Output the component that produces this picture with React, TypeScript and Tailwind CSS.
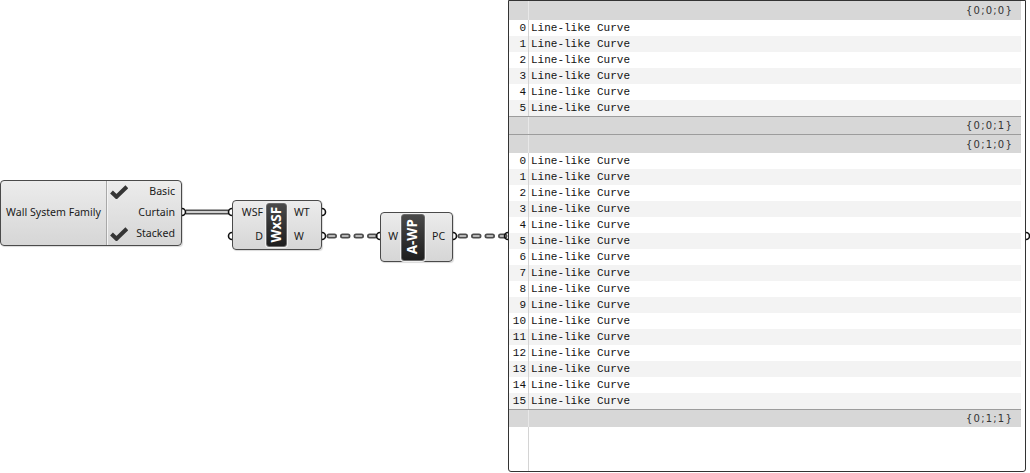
import React from "react";

const branches = [
  { head: "{0;0;0}", count: 6, foot: "{0;0;1}" },
  { head: "{0;1;0}", count: 16, foot: "{0;1;1}" },
];

function Check() {
  return (
    <svg width="18" height="14" viewBox="0 0 18 14">
      <path d="M1.5 7 L6.5 11.8 L16.8 1.8" fill="none" stroke="#353535" strokeWidth="4" strokeLinejoin="miter" />
    </svg>
  );
}

function LabelTag({ text, className }: { text: string; className: string }) {
  return (
    <div
      className={`flex items-center justify-center rounded-[3px] border border-[#6a6a6a] bg-gradient-to-b from-[#4a4a4a] to-[#1e1e1e] shadow-[0_0_0_1px_#f0f0f0] ${className}`}
    >
      <span className="-rotate-90 whitespace-nowrap font-['Noto_Sans',sans-serif] text-[13.5px] font-bold leading-none text-white">{text}</span>
    </div>
  );
}

const body =
  "absolute rounded-[4px] border border-[#4a4a4a] bg-gradient-to-b from-[#ececec] to-[#d6d6d6] shadow-[1px_1px_1px_rgba(0,0,0,0.15)] font-['Noto_Sans','Liberation_Sans',sans-serif] text-[10.6px] text-[#1a1a1a]";

export default function App() {
  return (
    <div className="relative h-[473px] w-[1030px] overflow-hidden bg-white">
      {/* wires + grips */}
      <svg className="absolute inset-0" width="1030" height="473">
        <line x1="186" y1="212" x2="229" y2="212" stroke="#4d4d4d" strokeWidth="5" />
        <line x1="186" y1="212" x2="229" y2="212" stroke="#cfcfcf" strokeWidth="1.8" />
        {[
          [325, 377],
          [456, 505],
        ].map(([a, b]) => (
          <g key={a}>
            <line x1={a + 4} y1="236" x2={b} y2="236" stroke="#4d4d4d" strokeWidth="5" strokeDasharray="5.5 8" strokeLinecap="round" />
            <line x1={a + 4} y1="236" x2={b} y2="236" stroke="#dadada" strokeWidth="1.6" strokeDasharray="5.5 8" strokeLinecap="round" />
          </g>
        ))}
        {/* output grips */}
        {[
          [182, 212],
          [322, 212],
          [322, 236],
          [453, 236],
          [1026, 236],
        ].map(([x, y]) => (
          <path key={`o${x}${y}`} d={`M${x} ${y - 3.5} A3.5 3.5 0 0 1 ${x} ${y + 3.5}`} fill="none" stroke="#111" strokeWidth="1.6" />
        ))}
        {/* input grips */}
        {[
          [232, 212],
          [232, 236],
          [380, 236],
          [508, 236],
        ].map(([x, y]) => (
          <path key={`i${x}${y}`} d={`M${x} ${y - 3.5} A3.5 3.5 0 0 0 ${x} ${y + 3.5}`} fill="none" stroke="#111" strokeWidth="1.6" />
        ))}
      </svg>

      {/* Value list */}
      <div className={`${body} left-0 top-[180px] flex h-[66px] w-[182px]`}>
        <div className="flex w-[106px] items-center justify-center border-r border-[#a8a8a8]">Wall System Family</div>
        <div className="flex flex-1 flex-col border-l border-[#f4f4f4] pr-[6px]">
          {[
            { label: "Basic", on: true },
            { label: "Curtain", on: false },
            { label: "Stacked", on: true },
          ].map((r) => (
            <div key={r.label} className="flex h-[22px] items-center justify-between pl-[2px]">
              <span className="w-[18px]">{r.on && <Check />}</span>
              <span>{r.label}</span>
            </div>
          ))}
        </div>
      </div>

      {/* WxSF */}
      <div className={`${body} left-[232px] top-[200px] flex h-[50px] w-[90px]`}>
        <div className="flex w-[30px] flex-col items-end">
          <div className="flex h-[24px] items-center">WSF</div>
          <div className="flex h-[24px] items-center">D</div>
        </div>
        <LabelTag text="WxSF" className="mx-[3px] my-[2px] w-[21px]" />
        <div className="flex flex-col pl-[4px]">
          <div className="flex h-[24px] items-center">WT</div>
          <div className="flex h-[24px] items-center">W</div>
        </div>
      </div>

      {/* A-WP */}
      <div className={`${body} left-[380px] top-[212px] flex h-[50px] w-[73px] items-center`}>
        <div className="w-[18px] pr-[1px] text-right">W</div>
        <LabelTag text="A-WP" className="mx-[2px] h-[47px] w-[24px]" />
        <div className="pl-[5px]">PC</div>
      </div>

      {/* Panel */}
      <div className="absolute left-[508px] top-0 flex h-[472px] w-[518px] flex-col rounded-b-[3px] border border-[#333] bg-white pr-[4px] text-[11px] text-[#111]">
        {branches.map((b, bi) => (
          <React.Fragment key={b.head}>
            <div className={`flex h-[19px] bg-[#d7d7d7] ${bi > 0 ? "border-t border-[#9c9c9c]" : ""}`}>
              <div className="w-[20px] border-r border-[#e8e8e8]" />
              <div className="flex flex-1 items-center justify-end pr-[8px] font-['DejaVu_Sans',sans-serif] text-[10px] tracking-[1.2px] text-[#333]">
                {b.head}
              </div>
            </div>
            {Array.from({ length: b.count }).map((_, i) => (
              <div key={i} className={`flex h-[16px] items-center font-['Liberation_Mono',monospace] ${i % 2 ? "bg-[#f3f3f3]" : "bg-white"}`}>
                <div className="flex h-full w-[20px] items-center justify-end border-r border-[#d4d4d4] pr-[2px]">{i}</div>
                <div className="pl-[2px]">Line-like Curve</div>
              </div>
            ))}
            <div className="flex h-[18px] border-t border-[#9c9c9c] bg-[#d7d7d7]">
              <div className="w-[20px] border-r border-[#e8e8e8]" />
              <div className="flex flex-1 items-center justify-end pr-[8px] font-['DejaVu_Sans',sans-serif] text-[10px] tracking-[1.2px] text-[#333]">
                {b.foot}
              </div>
            </div>
          </React.Fragment>
        ))}
        <div className="flex flex-1">
          <div className="w-[20px] border-r border-[#d4d4d4]" />
        </div>
      </div>
    </div>
  );
}
